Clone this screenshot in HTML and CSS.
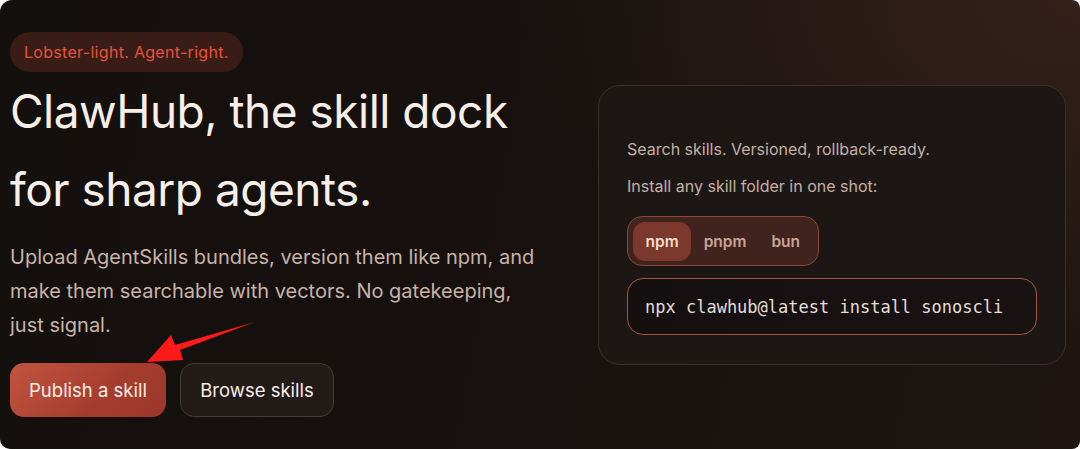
FILE: index.html
```html
<!DOCTYPE html>
<html lang="en">
<head>
<meta charset="utf-8">
<title>ClawHub</title>
<link rel="stylesheet" href="styles.css">
</head>
<body>
<main class="hero">
  <section class="hero-copy">
    <span class="badge">Lobster-light. Agent-right.</span>
    <h1 class="title">ClawHub, the skill dock<br>for sharp agents.</h1>
    <p class="lead">Upload AgentSkills bundles, version them like npm, and make them searchable with vectors. No gatekeeping, just signal.</p>
    <div class="actions">
      <a class="btn btn-primary" href="#">Publish a skill</a>
      <a class="btn btn-ghost" href="#">Browse skills</a>
    </div>
  </section>
  <aside class="install-card">
    <p class="card-text">Search skills. Versioned, rollback-ready.</p>
    <p class="card-text">Install any skill folder in one shot:</p>
    <div class="tabs">
      <span class="tab tab-active">npm</span>
      <span class="tab">pnpm</span>
      <span class="tab">bun</span>
    </div>
    <div class="command">npx clawhub@latest install sonoscli</div>
  </aside>
  <svg class="arrow" width="120" height="50" viewBox="0 0 120 50" aria-hidden="true">
    <path d="M110 2 L35 30 L38 40 L2 42 L26 15 L30 25 Z" fill="#ff1a1a"/>
  </svg>
</main>
</body>
</html>
```
FILE: styles.css
```css
html, body {
  margin: 0;
  padding: 0;
  background: #ffffff;
}
body {
  width: 1080px;
  height: 449px;
  overflow: hidden;
  font-family: "Inter", "Noto Sans", sans-serif;
}
.hero {
  position: relative;
  box-sizing: border-box;
  width: 1080px;
  height: 449px;
  border-radius: 12px 8px 8px 10px;
  background:
    radial-gradient(ellipse 700px 420px at 100% 0%, #35201a 0%, rgba(53,32,26,0) 80%),
    linear-gradient(100deg, #14100e 0%, #16110f 45%, #1f1612 100%);
  display: flex;
  justify-content: space-between;
  padding: 32px 14px 0 10px;
}
.hero-copy {
  display: flex;
  flex-direction: column;
  align-items: flex-start;
  width: 545px;
}
.badge {
  display: inline-block;
  height: 40px;
  line-height: 40px;
  padding: 0 14px 0 14px;
  border-radius: 20px;
  background: #3a1c16;
  color: #e5533d;
  font-size: 16px;
  letter-spacing: 0.3px;
}
.title {
  margin: 0;
  color: #f6efe8;
  font-weight: 400;
  font-size: 46px;
  line-height: 78px;
  letter-spacing: -0.5px;
}
.lead {
  margin: 12px 0 0 0;
  color: #c9b3a7;
  font-size: 20px;
  line-height: 34px;
  width: 538px;
}
.actions {
  display: flex;
  gap: 14px;
  margin-top: 21px;
}
.btn {
  box-sizing: border-box;
  height: 54px;
  display: inline-flex;
  align-items: center;
  justify-content: center;
  border-radius: 14px;
  font-size: 18.5px;
  text-decoration: none;
  color: #f7ede6;
}
.btn-primary {
  width: 156px;
  background: linear-gradient(135deg, #c25440 0%, #a53d2e 60%, #9b3729 100%);
}
.btn-ghost {
  width: 154px;
  background: #231b18;
  border: 1px solid #463a34;
}
.install-card {
  box-sizing: border-box;
  width: 468px;
  height: 280px;
  margin-top: 53px;
  border-radius: 22px;
  background: #1c1714;
  border: 1px solid #3a302b;
  padding: 53px 28px 0 28px;
}
.card-text {
  margin: 0 0 17px 0;
  font-size: 16px;
  line-height: 20px;
  color: #c4b0a4;
}
.tabs {
  box-sizing: border-box;
  display: inline-flex;
  align-items: center;
  gap: 0;
  height: 50px;
  padding: 0 5px;
  border-radius: 15px;
  background: #40231c;
  border: 1px solid #8f4634;
  margin-top: 3px;
}
.tab {
  height: 39px;
  line-height: 39px;
  padding: 0 12.5px;
  border-radius: 12px;
  font-size: 15.5px;
  font-weight: 600;
  color: #c8a497;
}
.tab-active {
  background: #7a392c;
  color: #f5dccf;
}
.command {
  box-sizing: border-box;
  width: 410px;
  height: 57px;
  margin-top: 12px;
  border-radius: 16px;
  border: 1px solid #a4553f;
  background: linear-gradient(90deg, #151010 0%, #181312 100%);
  display: flex;
  align-items: center;
  padding-left: 17px;
  font-family: "DejaVu Sans Mono", "Liberation Mono", monospace;
  font-size: 17px;
  color: #e6ddd6;
}
.arrow {
  position: absolute;
  left: 145px;
  top: 320px;
}
```
